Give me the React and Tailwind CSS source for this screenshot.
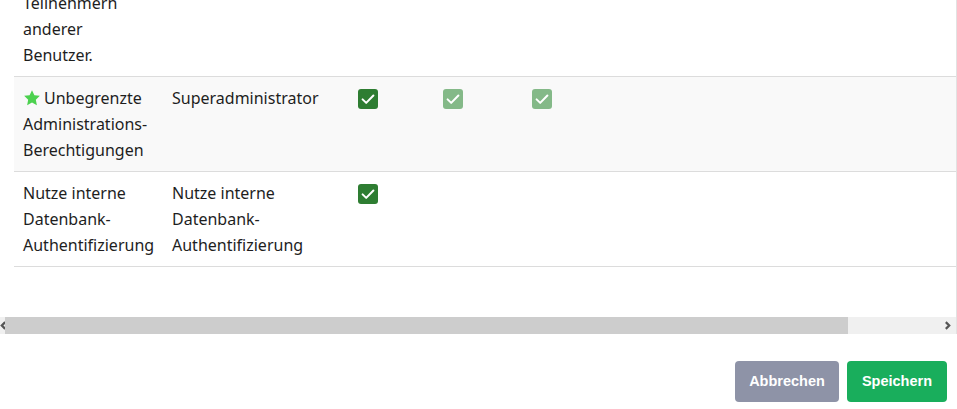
import React from "react";

const rows = [
  { col1: ["Teilnehmern", "anderer", "Benutzer."], col2: [], checks: [], bg: "bg-white" },
  {
    col1: ["Unbegrenzte", "Administrations-", "Berechtigungen"],
    star: true,
    col2: ["Superadministrator"],
    checks: ["on", "dim", "dim"],
    bg: "bg-[#f9f9f9]",
  },
  {
    col1: ["Nutze interne", "Datenbank-", "Authentifizierung"],
    col2: ["Nutze interne", "Datenbank-", "Authentifizierung"],
    checks: ["on"],
    bg: "bg-white",
  },
];

function Star() {
  return (
    <svg viewBox="0 0 24 24" className="inline-block w-[18px] h-[18px] mr-[3px] -mt-[3px] align-middle">
      <path
        d="M12 1.5l3.2 6.7 7.3.9-5.4 5.1 1.4 7.3L12 18l-6.5 3.5 1.4-7.3-5.4-5.1 7.3-.9z"
        fill="#4cd14f"
      />
    </svg>
  );
}

function Check({ dim }) {
  return (
    <div
      className={`mt-[4px] w-5 h-5 rounded-[3px] flex items-center justify-center ${
        dim ? "bg-[#84b988]" : "bg-[#2e7d32]"
      }`}
    >
      <svg viewBox="0 0 20 20" className="w-5 h-5">
        <path d="M4.6 10.4l3.6 3.5 7.2-7.4" fill="none" stroke="#fff" strokeWidth="2" strokeLinecap="round" strokeLinejoin="round" />
      </svg>
    </div>
  );
}

function Lines({ items, star }) {
  return (
    <div className="pl-[9px] whitespace-nowrap">
      {items.map((t, i) => (
        <div key={i}>
          {star && i === 0 && <Star />}
          {t}
        </div>
      ))}
    </div>
  );
}

export default function App() {
  return (
    <div className="w-[957px] h-[409px] overflow-hidden bg-white text-[#1e1e1e] font-['Noto_Sans',sans-serif]">
      <div className="h-[334px] flex flex-col border-r border-[#e2e2e2]">
        <div className="flex-1 overflow-hidden pl-[14px]">
          <div className="-mt-[18px]">
            {rows.map((r, i) => (
              <div
                key={i}
                className={`grid grid-cols-[149px_186px_85px_89px_1fr] py-2 text-[16px] leading-[26px] border-b border-[#dcdcdc] ${r.bg}`}
              >
                <Lines items={r.col1} star={r.star} />
                <Lines items={r.col2} />
                {[0, 1, 2].map((c) => (
                  <div key={c} className="pl-[9px]">
                    {r.checks[c] && <Check dim={r.checks[c] === "dim"} />}
                  </div>
                ))}
                <div />
              </div>
            ))}
          </div>
        </div>

        {/* horizontal scrollbar */}
        <div className="h-[17px] flex bg-[#f0f0f0]">
          <div className="w-[5px] flex items-center justify-end overflow-hidden">
            <svg viewBox="0 0 8 8" className="w-[9px] h-[9px] shrink-0 -mr-[3px]">
              <path d="M5.5 1L2.5 4l3 3" fill="none" stroke="#555" strokeWidth="2" />
            </svg>
          </div>
          <div className="w-[843px] bg-[#cdcdcd]" />
          <div className="flex-1" />
          <div className="w-[17px] flex items-center justify-center">
            <svg viewBox="0 0 8 8" className="w-[9px] h-[9px]">
              <path d="M2.5 1l3 3-3 3" fill="none" stroke="#555" strokeWidth="2" />
            </svg>
          </div>
        </div>
      </div>

      <div className="flex justify-end gap-2 pt-[27px] pr-[10px] font-['Liberation_Sans',Arial,sans-serif]">
        <button className="h-[41px] px-[14px] rounded-[4px] bg-[#8e93a7] text-white font-bold text-[14.5px]">
          Abbrechen
        </button>
        <button className="h-[41px] px-[15px] rounded-[4px] bg-[#19ae5c] text-white font-bold text-[14.5px]">
          Speichern
        </button>
      </div>
    </div>
  );
}
